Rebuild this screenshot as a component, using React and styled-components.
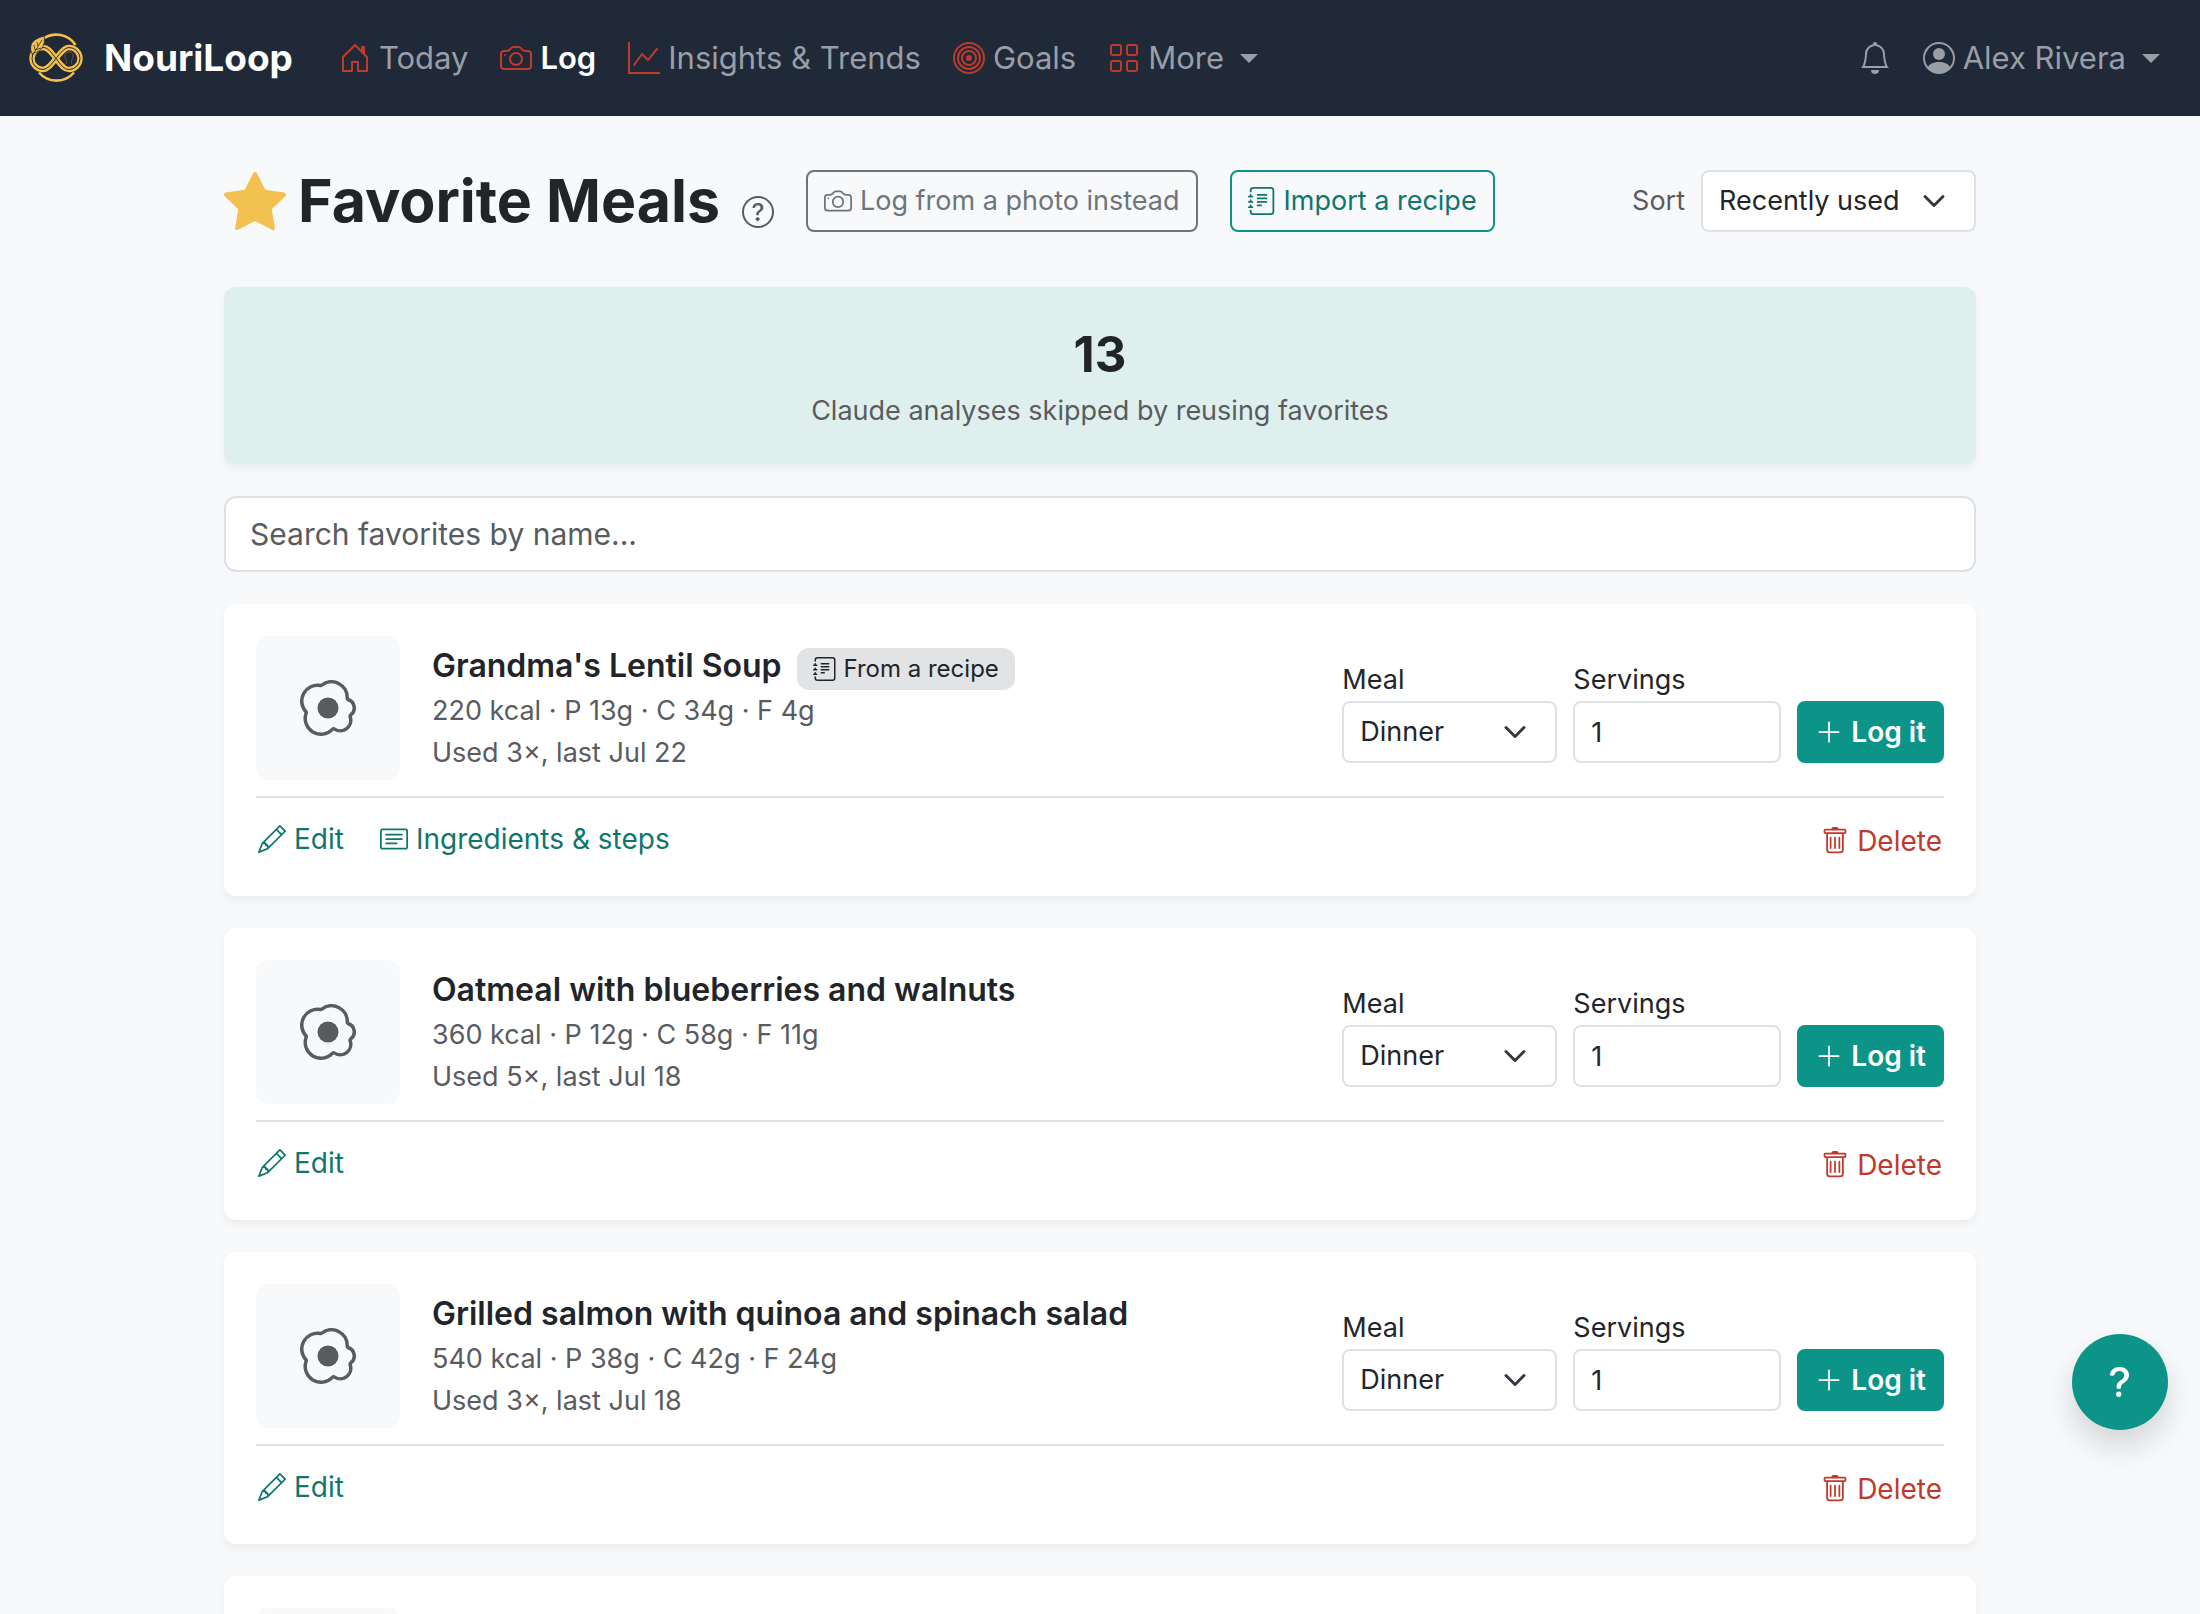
import React, { useState } from "react";
import styled, { createGlobalStyle } from "styled-components";
import {
  BsBell,
  BsBullseye,
  BsCamera,
  BsCardText,
  BsEggFried,
  BsGraphUp,
  BsGrid,
  BsHouseDoor,
  BsJournalText,
  BsPencil,
  BsPersonCircle,
  BsPlusLg,
  BsQuestionCircle,
  BsQuestionLg,
  BsStarFill,
  BsTrash,
} from "react-icons/bs";

const favorites = [
  { id: 1, name: "Grandma's Lentil Soup", macros: "220 kcal · P 13g · C 34g · F 4g", used: "Used 3×, last Jul 22", recipe: true },
  { id: 2, name: "Oatmeal with blueberries and walnuts", macros: "360 kcal · P 12g · C 58g · F 11g", used: "Used 5×, last Jul 18" },
  { id: 3, name: "Grilled salmon with quinoa and spinach salad", macros: "540 kcal · P 38g · C 42g · F 24g", used: "Used 3×, last Jul 18" },
  { id: 4, name: "Greek yogurt with honey", macros: "210 kcal · P 18g · C 24g · F 5g", used: "Used 2×, last Jul 17" },
];

const loopPath =
  "M32 32.5C27 26 24 21.5 19 21.5A11 11 0 0 0 19 43.5C28 43.5 36 21.5 45 21.5A11 11 0 0 1 45 43.5C40 43.5 37 39 32 32.5Z";

function Logo() {
  return (
    <LogoSvg viewBox="0 0 64 64" fill="none" aria-hidden="true">
      <path d="M19.5 12.5A23 23 0 0 1 51.5 19" stroke="#f3c04b" strokeWidth="2.6" />
      <path d="M15 46.5A23 23 0 0 0 50 46.5" stroke="#f3c04b" strokeWidth="2.6" />
      <path d={loopPath} stroke="#f3c04b" strokeWidth="5.4" />
      <path d={loopPath} stroke="#1f2937" strokeWidth="1" />
      <path
        d="M42 38C44 34 40 33 41 29C42 25 48 25 49 29C50 33 46 34 48 38"
        stroke="#7d6a3c"
        strokeWidth="0.8"
      />
      <path d="M8 28C4 18 9 13 20 10C22 20 17 25 10 27Z" fill="#f3c04b" stroke="#1f2937" strokeWidth="0.8" />
      <path d="M8 30L18 14M11 24L10 19M11 24L17 22M14 20L13 16" stroke="#1f2937" strokeWidth="0.8" />
    </LogoSvg>
  );
}

function FavoriteCard({ meal }) {
  const [slot, setSlot] = useState("Dinner");
  const [servings, setServings] = useState("1");

  return (
    <Card>
      <CardTop>
        <Thumb><BsEggFried /></Thumb>
        <Details>
          <NameRow>
            <Name>{meal.name}</Name>
            {meal.recipe && <Badge><BsJournalText /> From a recipe</Badge>}
          </NameRow>
          <Meta>{meal.macros}</Meta>
          <Meta>{meal.used}</Meta>
        </Details>
        <LogForm onSubmit={(e) => e.preventDefault()}>
          <Field>
            <label htmlFor={`meal-${meal.id}`}>Meal</label>
            <Select $width="215px" id={`meal-${meal.id}`} value={slot} onChange={(e) => setSlot(e.target.value)}>
              <option>Breakfast</option>
              <option>Lunch</option>
              <option>Dinner</option>
              <option>Snack</option>
            </Select>
          </Field>
          <Field>
            <label htmlFor={`servings-${meal.id}`}>Servings</label>
            <ServingsInput id={`servings-${meal.id}`} value={servings} onChange={(e) => setServings(e.target.value)} />
          </Field>
          <Button $variant="solid" type="submit"><BsPlusLg /> Log it</Button>
        </LogForm>
      </CardTop>
      <CardActions>
        <TextLink href="#edit"><BsPencil /> Edit</TextLink>
        {meal.recipe && <TextLink href="#steps"><BsCardText /> Ingredients &amp; steps</TextLink>}
        <DeleteButton type="button"><BsTrash /> Delete</DeleteButton>
      </CardActions>
    </Card>
  );
}

function App() {
  const [sort, setSort] = useState("Recently used");
  const [search, setSearch] = useState("");

  return (
    <>
      <GlobalStyle />
      <Navbar>
        <Brand href="#home"><Logo />NouriLoop</Brand>
        <NavLinks>
          <NavLink href="#today"><BsHouseDoor />Today</NavLink>
          <NavLink href="#log" $active><BsCamera />Log</NavLink>
          <NavLink href="#insights"><BsGraphUp />Insights &amp; Trends</NavLink>
          <NavLink href="#goals"><BsBullseye />Goals</NavLink>
          <NavLink as="button" type="button"><BsGrid />More<Caret /></NavLink>
        </NavLinks>
        <UserLinks>
          <NavLink as="button" type="button" aria-label="Notifications"><BsBell /></NavLink>
          <NavLink as="button" type="button"><BsPersonCircle />Alex Rivera<Caret /></NavLink>
        </UserLinks>
      </Navbar>

      <Main>
        <Header>
          <Title><BsStarFill />Favorite Meals</Title>
          <HelpButton type="button" aria-label="About favorites"><BsQuestionCircle /></HelpButton>
          <HeaderActions>
            <Button type="button"><BsCamera /> Log from a photo instead</Button>
            <Button type="button" $variant="teal"><BsJournalText /> Import a recipe</Button>
          </HeaderActions>
          <SortBox>
            <label htmlFor="sort">Sort</label>
            <Select $width="275px" id="sort" value={sort} onChange={(e) => setSort(e.target.value)}>
              <option>Recently used</option>
              <option>Most used</option>
              <option>Name</option>
            </Select>
          </SortBox>
        </Header>

        <Stat>
          <strong>13</strong>
          <span>Claude analyses skipped by reusing favorites</span>
        </Stat>

        <SearchInput
          type="search"
          aria-label="Search favorites"
          placeholder="Search favorites by name..."
          value={search}
          onChange={(e) => setSearch(e.target.value)}
        />

        {favorites
          .filter((meal) => meal.name.toLowerCase().includes(search.toLowerCase()))
          .map((meal) => <FavoriteCard key={meal.id} meal={meal} />)}
      </Main>

      <HelpFab type="button" aria-label="Help"><BsQuestionLg /></HelpFab>
    </>
  );
}

const GlobalStyle = createGlobalStyle`
  * {
    box-sizing: border-box;
  }
  html {
    scrollbar-width: none;
  }
  body {
    margin: 0;
    background: #f8f9fb;
    color: #212529;
    font: 400 27px/42px Inter, "Liberation Sans", sans-serif;
  }
  button, input, select {
    font: inherit;
    color: inherit;
  }
  button {
    cursor: pointer;
  }
  a {
    text-decoration: none;
  }
  svg {
    flex-shrink: 0;
    width: 28px;
    height: 28px;
  }
`;

const Navbar = styled.nav`
  display: flex;
  align-items: center;
  height: 116px;
  padding: 0 24px;
  background: #1f2937;
`;

const Brand = styled.a`
  display: flex;
  align-items: center;
  gap: 16px;
  margin-right: 30px;
  color: #fff;
  font-size: 37px;
  font-weight: 700;
`;

const LogoSvg = styled.svg`
  width: 64px;
  height: 64px;
`;

const NavLinks = styled.div`
  display: flex;
`;

const UserLinks = styled(NavLinks)`
  margin-left: auto;
`;

const NavLink = styled.a`
  display: flex;
  align-items: center;
  gap: 8px;
  padding: 16px;
  border: 0;
  background: none;
  color: ${(p) => (p.$active ? "#fff" : "#9a9ea6")};
  font-size: 31px;
  font-weight: ${(p) => (p.$active ? 600 : 400)};
  line-height: 48px;
  white-space: nowrap;

  svg {
    width: 32px;
    height: 32px;
  }
  ${NavLinks}:not(${UserLinks}) > & svg {
    color: #c0392b;
  }
`;

const Caret = styled.span`
  margin-left: 8px;
  border-top: 9px solid;
  border-left: 9px solid transparent;
  border-right: 9px solid transparent;
`;

const Main = styled.main`
  display: flex;
  flex-direction: column;
  gap: 32px;
  max-width: 1800px;
  margin: 0 auto;
  padding: 48px 24px;
`;

const Header = styled.header`
  display: flex;
  align-items: center;
  height: 74px;
  margin-bottom: 17px;
`;

const Title = styled.h1`
  display: flex;
  align-items: center;
  gap: 12px;
  margin: 0;
  font-size: 59px;
  font-weight: 700;
  line-height: 74px;
  white-space: nowrap;

  svg {
    width: 62px;
    height: 62px;
    color: #f3c14f;
  }
`;

const HelpButton = styled.button`
  display: flex;
  align-self: flex-end;
  margin: 0 32px 10px 22px;
  padding: 0;
  border: 0;
  background: none;
  color: #595c5f;

  svg {
    width: 32px;
    height: 32px;
  }
`;

const HeaderActions = styled.div`
  display: flex;
  gap: 32px;
`;

const variants = {
  teal: { border: "#0d9488", color: "#0f766e", background: "transparent", weight: 400, size: "27px" },
  solid: { border: "#0d9488", color: "#fff", background: "#0d9488", weight: 600, size: "28px" },
  gray: { border: "#6c757d", color: "#6c757d", background: "transparent", weight: 400, size: "27px" },
};

const look = (key) => (p) => variants[p.$variant || "gray"][key];

const Button = styled.button`
  display: flex;
  align-items: center;
  gap: 8px;
  height: 62px;
  padding: 0 16px;
  border: 2px solid ${look("border")};
  border-radius: 8px;
  background: ${look("background")};
  color: ${look("color")};
  font-size: ${look("size")};
  font-weight: ${look("weight")};
  white-space: nowrap;
`;

const SortBox = styled.div`
  display: flex;
  align-items: center;
  gap: 16px;
  margin-left: auto;
  color: #595c5f;
`;

const Select = styled.select`
  appearance: none;
  width: ${(p) => p.$width};
  height: 62px;
  padding: 0 64px 0 16px;
  border: 2px solid #dee2e6;
  border-radius: 8px;
  background: #fff url("data:image/svg+xml,%3csvg xmlns='http://www.w3.org/2000/svg' viewBox='0 0 16 16'%3e%3cpath fill='none' stroke='%23343a40' stroke-linecap='round' stroke-linejoin='round' stroke-width='2' d='m2 5 6 6 6-6'/%3e%3c/svg%3e") no-repeat right 24px center / 32px 24px;
  color: #212529;
`;

const Stat = styled.section`
  display: flex;
  flex-direction: column;
  align-items: center;
  padding: 32px;
  border-radius: 12px;
  background: #dfefee;
  box-shadow: 0 4px 8px rgba(0, 0, 0, 0.06);

  strong {
    font-size: 49px;
    font-weight: 700;
    line-height: 71px;
  }
  span {
    color: #595c5f;
  }
`;

const SearchInput = styled.input`
  width: 100%;
  height: 76px;
  padding: 0 24px;
  border: 2px solid #dee2e6;
  border-radius: 12px;
  background: #fff;
  font-size: 30px;

  &::placeholder {
    color: #595c5f;
    opacity: 1;
  }
`;

const Card = styled.article`
  padding: 32px;
  border-radius: 12px;
  background: #fff;
  box-shadow: 0 4px 8px rgba(0, 0, 0, 0.06);
`;

const CardTop = styled.div`
  display: flex;
  align-items: center;
  gap: 32px;
  padding-bottom: 16px;
  border-bottom: 2px solid #dee2e6;
`;

const Thumb = styled.div`
  display: flex;
  align-items: center;
  justify-content: center;
  width: 144px;
  height: 144px;
  border-radius: 12px;
  background: #f8f9fb;
  color: #595c5f;

  svg {
    width: 56px;
    height: 56px;
  }
`;

const Details = styled.div`
  flex: 1;
`;

const NameRow = styled.div`
  display: flex;
  align-items: flex-end;
  gap: 16px;
`;

const Name = styled.h2`
  margin: 0;
  font-size: 32px;
  font-weight: 600;
  line-height: 48px;
`;

const Badge = styled.span`
  display: flex;
  align-items: center;
  gap: 6px;
  padding: 0 16px;
  border-radius: 12px;
  background: #e2e3e5;
  font-size: 24px;
  line-height: 42px;

  svg {
    width: 24px;
    height: 24px;
  }
`;

const Meta = styled.div`
  color: #595c5f;
`;

const LogForm = styled.form`
  display: flex;
  align-items: flex-end;
  gap: 16px;
  padding-top: 6px;
`;

const Field = styled.div`
  display: flex;
  flex-direction: column;
`;

const ServingsInput = styled.input`
  width: 208px;
  height: 62px;
  padding: 0 16px;
  border: 2px solid #dee2e6;
  border-radius: 8px;
  background: #fff;
`;

const CardActions = styled.div`
  display: flex;
  align-items: center;
  gap: 32px;
  padding-top: 16px;
  font-size: 28px;
`;

const TextLink = styled.a`
  display: flex;
  align-items: center;
  gap: 8px;
  padding: 4px 2px;
  color: #0f766e;
`;

const DeleteButton = styled.button`
  display: flex;
  align-items: center;
  gap: 8px;
  margin-left: auto;
  padding: 6px 2px 2px;
  border: 0;
  background: none;
  color: #c0392b;
`;

const HelpFab = styled.button`
  position: fixed;
  right: 32px;
  bottom: 184px;
  display: flex;
  align-items: center;
  justify-content: center;
  width: 96px;
  height: 96px;
  padding: 0;
  border: 0;
  border-radius: 50%;
  background: #0d9488;
  box-shadow: 0 16px 32px rgba(0, 0, 0, 0.15);
  color: #fff;

  svg {
    width: 40px;
    height: 40px;
  }
`;

export default App;
